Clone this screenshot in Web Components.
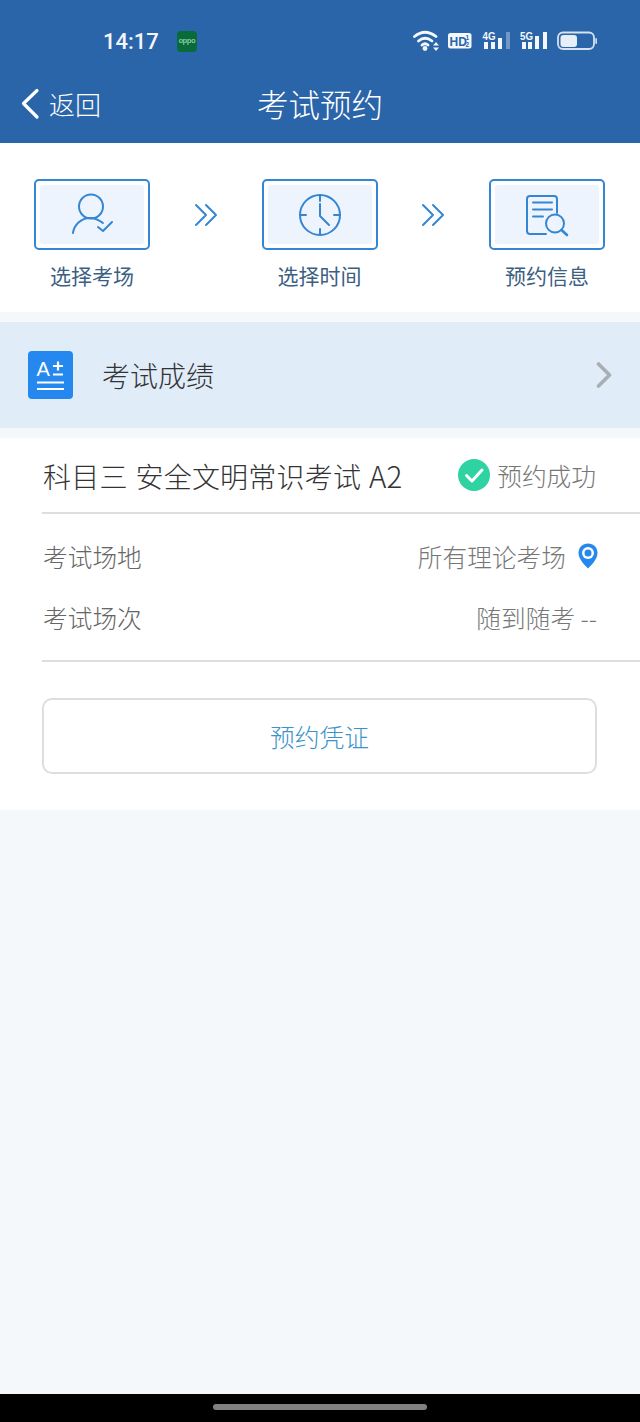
<!DOCTYPE html>
<html lang="zh"><head><meta charset="utf-8"><title>考试预约</title>
<style>
html,body{margin:0;padding:0;height:1422px;overflow:hidden}
body{background:#f4f8fa;font-family:"Noto Sans CJK SC","Noto Sans",sans-serif;font-weight:300;display:flex;flex-direction:column}
.big{font-size:29.500px}
</style></head><body>
<app-header></app-header>
<step-flow>
  <step-item label="选择考场" icon="user"></step-item>
  <flow-arrows></flow-arrows>
  <step-item label="选择时间" icon="clock"></step-item>
  <flow-arrows></flow-arrows>
  <step-item label="预约信息" icon="doc"></step-item>
</step-flow>
<score-banner>考试成绩</score-banner>
<exam-card>
  <span slot="title">科目三 安全文明常识考试 <span class="big">A2</span></span>
  <span slot="status">预约成功</span>
  <info-row label="考试场地" pin>所有理论考场</info-row>
  <info-row label="考试场次">随到随考 --</info-row>
  <span slot="action">预约凭证</span>
</exam-card>
<home-bar></home-bar>
<script>
const define=(name,html,extra)=>customElements.define(name,class extends HTMLElement{
  constructor(){super();this.attachShadow({mode:"open"}).innerHTML=html;}
  connectedCallback(){extra&&extra.call(this,this.shadowRoot);}
});
define("app-header",`<style>
:host{display:block;background:#2b65a9;color:#fff;height:143px;box-sizing:border-box}
.status{height:82px;display:flex;align-items:center;position:relative}
.time{margin:2px 0 0 103px;font:500 22px/1 Roboto,sans-serif;width:74px;color:#f2f6fb}
.logo{width:20px;height:21px;border-radius:4px;background:#0a6b3a;display:flex;align-items:center;justify-content:center;font:7.500px/1 "Liberation Sans",sans-serif;color:#bfeccf}
.icons{margin-left:auto;margin-right:43px;display:flex;align-items:center;height:24px}
.nav{height:61px;position:relative;display:flex;align-items:center;justify-content:center}
.back{position:absolute;left:20px;top:6px;display:flex;align-items:center;height:32px;gap:9px;font-size:26px;line-height:32px}
.title{font-size:31.500px;line-height:44px;margin-top:-20px}
svg{display:block}
</style>
<div class="status"><span class="time">14:17</span><span class="logo">oppo</span>
<div class="icons">
<svg width="184" height="24" viewBox="0 0 184 24" fill="none" stroke="#f4f8fc">
<g stroke-width="2.800" stroke-linecap="round"><path d="M1.500 7.500Q12-1 23 7.500"/><path d="M5.500 12Q12 6.500 19 12"/><path d="M9 16Q12 13.500 15 16"/></g>
<circle cx="12" cy="19.500" r="2.400" fill="#f4f8fc" stroke="none"/>
<path d="M20 16.500h6l-3-3.500zM20 18.500h6l-3 3.500z" fill="#f4f8fc" stroke="none"/>
<rect x="35" y="4" width="23.500" height="15.500" rx="2.500" fill="#f4f8fc" stroke="none"/>
<text x="36.500" y="16.500" font-family="Liberation Sans" font-weight="700" font-size="12" fill="#2b65a9" stroke="none">HD</text>
<text x="52.500" y="10.500" font-family="Liberation Sans" font-weight="700" font-size="6.500" fill="#2b65a9" stroke="none">1</text>
<text x="52.500" y="17.500" font-family="Liberation Sans" font-weight="700" font-size="6.500" fill="#2b65a9" stroke="none">2</text>
<text x="69.500" y="10.500" font-family="Liberation Sans" font-weight="700" font-size="11" textLength="13" lengthAdjust="spacingAndGlyphs" fill="#f4f8fc" stroke="none">4G</text>
<g fill="#f4f8fc" stroke="none"><rect x="71" y="13" width="4" height="7"/><rect x="78" y="13" width="4" height="7"/><rect x="85" y="9" width="4" height="11"/><rect x="93" y="3" width="4" height="17" opacity=".35"/></g>
<text x="107" y="10.500" font-family="Liberation Sans" font-weight="700" font-size="11" textLength="13" lengthAdjust="spacingAndGlyphs" fill="#f4f8fc" stroke="none">5G</text>
<g fill="#f4f8fc" stroke="none"><rect x="109" y="13" width="4" height="7"/><rect x="115" y="13" width="4" height="7"/><rect x="122" y="7" width="4" height="13"/><rect x="130" y="3" width="4" height="17"/></g>
<rect x="145" y="3.500" width="36" height="16.500" rx="5" stroke-width="1.800" opacity=".85"/>
<rect x="147.500" y="6" width="16.500" height="12" rx="3" fill="#e6eef7" stroke="none"/>
<rect x="182.300" y="9" width="1.700" height="6" rx=".8" fill="#f4f8fc" stroke="none" opacity=".8"/>
</svg></div></div>
<div class="nav"><div class="back"><svg width="20" height="32" viewBox="0 0 20 32" fill="none" stroke="#fff" stroke-width="3.200" stroke-linecap="round" stroke-linejoin="round"><path d="M17 2.500 3.500 15.500 17 29"/></svg><span>返回</span></div><div class="title">考试预约</div></div>`);
define("step-flow",`<style>
:host{display:flex;background:#fff;height:169px;box-sizing:border-box;padding:36px 35px 0 34px;justify-content:space-between;align-items:flex-start}
</style><slot></slot>`);
const icons={
user:`<circle cx="36" cy="24.500" r="12"/><path d="M18 51C19 43 26 36 35 36 40 36 44 38 48 41"/><path d="M43 45l5 4 9-9"/>`,
clock:`<circle cx="58" cy="35" r="20"/><path d="M58 15v6M58 49v6M38 35h6M72 35h6M58 24v12l9 9"/>`,
doc:`<path d="M66 35V21a3 3 0 0 0-3-3H39a3 3 0 0 0-3 3v32a3 3 0 0 0 3 3h16"/><path d="M42 24.500h19M42 31.500h19M42 38.500h10"/><circle cx="64" cy="45.500" r="9"/><path d="M70.500 52l5.500 5" stroke-width="2.600"/>`};
define("step-item",`<style>
:host{display:flex;flex-direction:column;align-items:center;width:116px}
.box{width:116px;height:71px;box-sizing:border-box;border:2px solid #3586d2;border-radius:5px;padding:4px;background:#fff}
.in{height:100%;background:#edf4fd;border-radius:3px;display:flex;align-items:center;justify-content:center}
svg{display:block;fill:none;stroke:#3586d2;stroke-width:2;stroke-linecap:round;stroke-linejoin:round}
.l{margin-top:10px;font-size:21px;line-height:30px;color:#3c6082;white-space:nowrap;font-weight:400}
</style><div class="box"><div class="in"><svg id="s" width="100" height="58"></svg></div></div><div class="l" id="l"></div>`,function(r){
  const k=this.getAttribute("icon");r.getElementById("l").textContent=this.getAttribute("label");
  const s=r.getElementById("s");
  const x={user:[-13,4],clock:[8,6],doc:[6,8]}[k];
  s.setAttribute("viewBox",`${x[0]} ${x[1]} 100 58`);
  s.innerHTML=icons[k];
});
define("flow-arrows",`<style>:host{display:block;width:26px;margin-top:24px}svg{display:block;margin-left:1px}</style>
<svg width="24" height="24" viewBox="0 0 24 24" fill="none" stroke="#3586d2" stroke-width="2" stroke-linecap="round" stroke-linejoin="round"><path d="M2 2l10 10L2 22M12 2l10 10-10 10"/></svg>`);
define("score-banner",`<style>
:host{display:flex;align-items:center;background:#e0ecf8;height:106px;margin:10px 0;padding:0 28px;box-sizing:border-box;color:#333;font-size:28px;font-weight:300}
.ic{margin-right:29px;flex:none;display:block}
.t{flex:1}
.ic text{font-family:"Liberation Sans",sans-serif}
</style><svg class="ic" width="45" height="48" viewBox="0 0 45 48"><rect width="45" height="48" rx="4" fill="#2588ee"/>
<text x="8.500" y="25" fill="#fff" font-size="20">A</text><path d="M25 15h10M30 10.500v9M25 23.500h10M9 31.500h27M9 38h27" stroke="#fff" stroke-width="2.200" fill="none"/></svg>
<span class="t"><slot></slot></span>
<svg width="16" height="26" viewBox="0 0 16 26" fill="none" stroke="#aaaeb2" stroke-width="3.600" stroke-linecap="round" stroke-linejoin="round"><path d="M2.500 2 13.500 13 2.500 24"/></svg>`);
define("exam-card",`<style>
:host{display:block;background:#fff;height:372px;box-sizing:border-box;padding-left:42px}
.head{height:76px;box-sizing:border-box;border-bottom:2px solid #dcdfe2;display:flex;align-items:center;padding-right:44px}
.title{flex:1;font-size:28px;color:#333;white-space:nowrap;font-weight:300;margin-left:1px;word-spacing:1.500px;letter-spacing:.2px}
.st{display:flex;align-items:center;gap:7px;font-size:24.700px;color:#777;font-weight:300}
svg{display:block}
.rows{height:148px;box-sizing:border-box;padding-top:11px;border-bottom:2px solid #dcdfe2;display:flex;flex-direction:column}
.btn{margin:36px 43px 0 0;height:76px;box-sizing:border-box;border:2px solid #dcdfe2;border-radius:10px;display:flex;align-items:center;justify-content:center;font-size:24.700px;color:#3c93c9;font-weight:300}
</style><div class="head"><span class="title"><slot name="title"></slot></span><span class="st">
<svg width="32" height="32" viewBox="0 0 32 32"><circle cx="16" cy="16" r="16" fill="#2fd3a2"/><path d="M8.500 16.500l5.500 5.500 10-11" fill="none" stroke="#fff" stroke-width="3" stroke-linecap="round" stroke-linejoin="round"/></svg>
<slot name="status"></slot></span></div><div class="rows"><slot></slot></div><div class="btn"><slot name="action"></slot></div>`);
define("info-row",`<style>
:host{display:flex;align-items:center;height:61px;padding-right:43px;font-size:24.700px;color:#666;font-weight:300;white-space:nowrap}
.l{flex:1;margin-left:1px}
.v{color:#777}
svg{display:block;margin:0 -1px 0 12px}
</style><span class="l" id="l"></span><span class="v"><slot></slot></span><span id="p"></span>`,function(r){
  r.getElementById("l").textContent=this.getAttribute("label");
  if(this.hasAttribute("pin"))r.getElementById("p").innerHTML=`<svg width="20" height="26" viewBox="0 0 20 26"><path d="M10 .5C4.500.5.500 4.500.5 10c0 6 6 12 9.500 15.500C13.500 22 19.500 16 19.500 10 19.500 4.500 15.500.5 10 .5z" fill="#2588ee"/><circle cx="10" cy="10" r="6" fill="#fff"/><circle cx="10" cy="10" r="3.500" fill="#2588ee"/></svg>`;
});
define("home-bar",`<style>
:host{display:flex;justify-content:center;background:#000;height:28px;margin-top:auto;padding-top:10px;box-sizing:border-box}
i{display:block;width:214px;height:6px;border-radius:3px;background:#808080}
</style><i></i>`);
</script>
</body></html>
